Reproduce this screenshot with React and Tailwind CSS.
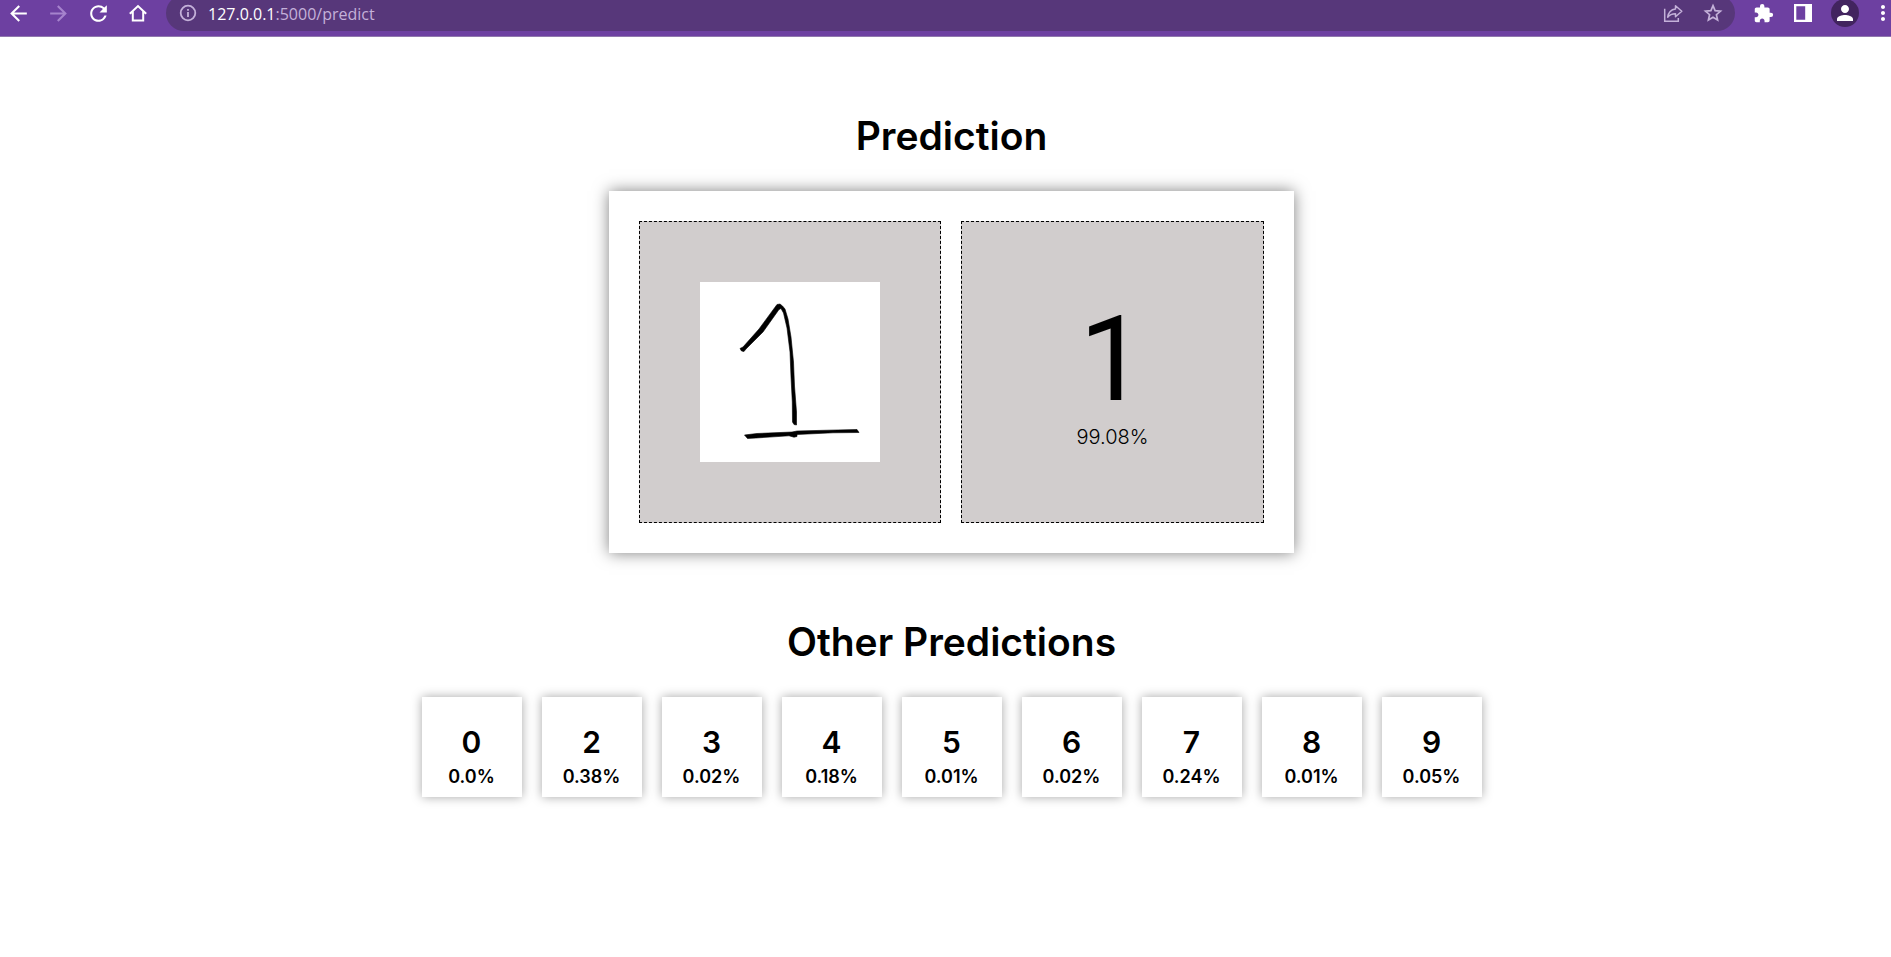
import React from "react";
import {
  MdArrowBack,
  MdArrowForward,
  MdRefresh,
  MdExtension,
  MdPerson,
  MdMoreVert,
} from "react-icons/md";

const others = [
  { digit: "0", score: "0.0%" },
  { digit: "2", score: "0.38%" },
  { digit: "3", score: "0.02%" },
  { digit: "4", score: "0.18%" },
  { digit: "5", score: "0.01%" },
  { digit: "6", score: "0.02%" },
  { digit: "7", score: "0.24%" },
  { digit: "8", score: "0.01%" },
  { digit: "9", score: "0.05%" },
];

function ToolButton({ label, className = "w-6", children }) {
  return (
    <button
      type="button"
      aria-label={label}
      className={`flex h-7 shrink-0 items-center justify-center ${className}`}
    >
      {children}
    </button>
  );
}

function HomeIcon() {
  return (
    <svg className="size-6" viewBox="0 0 24 24" fill="none" stroke="currentColor" strokeWidth="2">
      <path d="M3.800 12.700 12 5l8.200 7.700M6.800 10.500V19.500h10.400V10.500" />
    </svg>
  );
}

function InfoIcon() {
  return (
    <svg className="size-5 shrink-0" viewBox="0 0 20 20" fill="none" stroke="currentColor" strokeWidth="1.8">
      <circle cx="10" cy="10" r="7.300" />
      <path d="M10 9v5M10 6v1.800" />
    </svg>
  );
}

function StarIcon() {
  return (
    <svg className="size-6" viewBox="0 0 24 24" fill="none" stroke="currentColor" strokeWidth="1.7">
      <path d="M12 4.600 14.100 9.600 19.500 10.100 15.400 13.700 16.600 19 12 16.200 7.400 19 8.600 13.700 4.500 10.100 9.900 9.600Z" />
    </svg>
  );
}

function ShareIcon() {
  return (
    <svg className="size-6" viewBox="0 0 24 24" fill="none" stroke="currentColor" strokeWidth="1.5">
      <path d="M3.700 7.700V20.300h13.600V17" />
      <path strokeLinejoin="round" d="M14.500 4.700 20.800 10.300 14.500 15.800V12.700C11 12.700 8.600 13.700 6.700 16.200 7.300 11.700 10 8.400 14.500 7.900Z" />
    </svg>
  );
}

function SidePanelIcon() {
  return (
    <svg className="size-6" viewBox="0 0 24 24" fill="currentColor">
      <path fillRule="evenodd" d="M3 3h18v18H3zM5.300 5.300v13.400h8.900V5.300z" />
    </svg>
  );
}

function BrowserBar() {
  return (
    <header className="h-[37px] overflow-hidden border-b border-[#9078ad] bg-[#6d40a1] text-white">
      <div className="-mt-[5px] flex h-9 items-center gap-4 pl-1.5">
        <ToolButton label="Back"><MdArrowBack className="size-[25px] shrink-0" /></ToolButton>
        <ToolButton label="Forward"><MdArrowForward className="size-[25px] shrink-0 text-[#a683cd]" /></ToolButton>
        <ToolButton label="Reload"><MdRefresh className="size-[25px] shrink-0" /></ToolButton>
        <ToolButton label="Home"><HomeIcon /></ToolButton>
        <div className="flex h-9 min-w-0 flex-1 items-center rounded-full bg-[#57377a] pl-3 pr-2.5 text-[#c4b1d9]">
          <InfoIcon />
          <p className="min-w-0 flex-1 pl-2.5 pt-0.5 font-['Open_Sans',sans-serif] text-base leading-6">
            <span className="text-white">127.0.0.1</span>:5000/predict
          </p>
          <div className="flex gap-4">
            <ToolButton label="Share"><ShareIcon /></ToolButton>
            <ToolButton label="Bookmark"><StarIcon /></ToolButton>
          </div>
        </div>
        <ToolButton label="Extensions"><MdExtension className="size-[21px]" /></ToolButton>
        <ToolButton label="Side panel"><SidePanelIcon /></ToolButton>
        <ToolButton label="Profile" className="w-7 rounded-full bg-[#42245f]"><MdPerson className="size-6" /></ToolButton>
        <ToolButton label="More" className="w-4"><MdMoreVert className="size-6 shrink-0" /></ToolButton>
      </div>
    </header>
  );
}

function Drawing() {
  return (
    <svg
      className="size-[180px] bg-white"
      viewBox="0 0 180 180"
      stroke="currentColor"
      strokeWidth="0.6"
      role="img"
      aria-label="Hand-drawn digit"
    >
      <path d="M40 66.500 43 65 59 47 77 22.500 80 22 82.500 24 85 27 88 37 91 55 93.500 80 94.500 104 96.500 130V143L94 142.500 92.500 140 92.300 120 91 95 90 70 87 46 83.500 31 81 26.500 79 27.500 63 50 46 67 44 69.500 41.500 69Z" />
      <path d="M44.500 153 57 151.500 92 150 97 149 128 148.200 157 147.500 159 150.500 133 150.800 97 152.500V154.500L94 155.200 89 153.800 56 156 47.500 156.500Z" />
    </svg>
  );
}

export default function App() {
  return (
    <div className="min-h-screen bg-white font-['Inter',sans-serif] text-black">
      <BrowserBar />
      <main className="flex flex-col items-center pl-3 pt-[74px]">
        <h1 className="text-[39px] font-semibold leading-[50px]">Prediction</h1>
        <section className="mt-[30px] flex gap-5 p-[30px] shadow-[0_0_15px_rgba(0,0,0,0.5)]">
          <div className="flex size-[302px] items-center justify-center border border-dashed border-black bg-[#d1cdcd]">
            <Drawing />
          </div>
          <div className="flex h-[302px] w-[303px] flex-col items-center justify-center border border-dashed border-black bg-[#d1cdcd]">
            <p className="font-['Roboto',sans-serif] text-[118px] font-normal leading-[130px]">1</p>
            <p className="text-xl font-light leading-6">99.08%</p>
          </div>
        </section>
        <h2 className="mt-16 text-[39px] font-semibold leading-[50px]">Other Predictions</h2>
        <ul className="mt-[30px] flex gap-5">
          {others.map(({ digit, score }) => (
            <li
              key={digit}
              className="flex size-[100px] flex-col items-center justify-end pb-1.5 font-semibold shadow-[0_0_10px_rgba(0,0,0,0.35)]"
            >
              <span className="mb-[3px] text-3xl leading-9">{digit}</span>
              <span className="text-lg leading-7">{score}</span>
            </li>
          ))}
        </ul>
      </main>
    </div>
  );
}
